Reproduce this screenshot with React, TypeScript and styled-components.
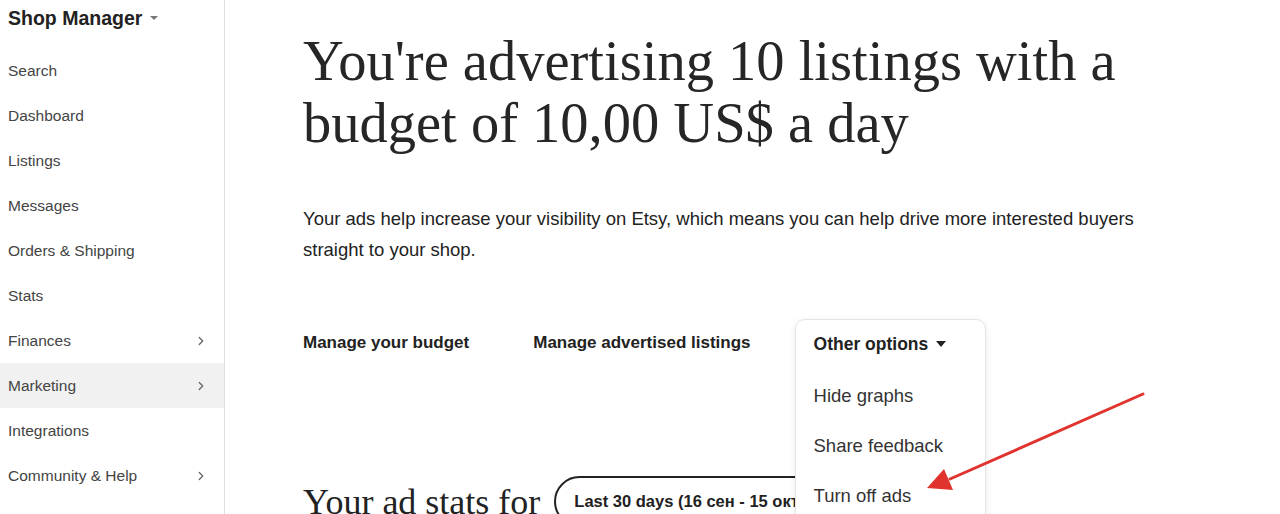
import React from 'react';
import styled, { createGlobalStyle } from 'styled-components';
import { ChevronRight } from 'lucide-react';

const GlobalStyles = createGlobalStyle`
  html, body {
    margin: 0;
    padding: 0;
    height: 100%;
    overflow: hidden;
    background: #fff;
  }
  body {
    font-family: "Liberation Sans", Arial, sans-serif;
    color: #222;
  }
  #root {
    height: 100%;
  }
`;

const Page = styled.div`
  display: flex;
  height: 100vh;
  overflow: hidden;
  position: relative;
`;

const Sidebar = styled.nav`
  width: 224px;
  flex-shrink: 0;
  border-right: 1px solid #e1e1e1;
  display: flex;
  flex-direction: column;
`;

const ShopTitle = styled.div`
  display: flex;
  align-items: center;
  gap: 8px;
  padding: 3px 8px 0;
  height: 30px;
  font-size: 19.5px;
  font-weight: 700;
  color: #222;
  margin-bottom: 15px;
`;

const Caret = styled.span`
  width: 0;
  height: 0;
  border-left: 4px solid transparent;
  border-right: 4px solid transparent;
  border-top: 4px solid #777;
`;

const NavItem = styled.div<{ $active?: boolean }>`
  display: flex;
  align-items: center;
  justify-content: space-between;
  height: 45px;
  padding: 0 16px 0 8px;
  font-size: 15.5px;
  color: #444;
  background: ${(p) => (p.$active ? '#f1f1f1' : 'transparent')};
`;

const Main = styled.main`
  flex: 1;
  padding: 30px 0 0 78px;
`;

const Headline = styled.h1`
  margin: 0;
  font-family: "Liberation Serif", "Times New Roman", serif;
  font-weight: 400;
  font-size: 56.5px;
  line-height: 62px;
  color: #262626;
  max-width: 860px;
`;

const Intro = styled.p`
  margin: 49px 0 0;
  font-size: 18.5px;
  line-height: 31px;
  color: #222;
  max-width: 850px;
`;

const ActionRow = styled.div`
  display: flex;
  align-items: center;
  margin-top: 67px;
  height: 22px;
`;

const ActionLink = styled.div<{ $gap: number }>`
  font-size: 17px;
  font-weight: 700;
  color: #222;
  margin-right: ${(p) => p.$gap}px;
`;

const DropdownWrap = styled.div`
  position: relative;
  width: 152px;
  height: 22px;
`;

const DropdownPanel = styled.div`
  position: absolute;
  left: -19px;
  top: -13px;
  width: 191px;
  height: 240px;
  border: 1px solid #e4e4e4;
  border-radius: 10px;
  box-shadow: 0 2px 8px rgba(0, 0, 0, 0.08);
  background: #fff;
  padding: 13px 18px;
  box-sizing: border-box;
  z-index: 2;
`;

const DropdownToggle = styled.div`
  display: flex;
  align-items: center;
  gap: 8px;
  font-size: 17.5px;
  font-weight: 700;
  line-height: 22px;
  color: #222;
  margin-bottom: 30px;
`;

const DarkCaret = styled.span`
  width: 0;
  height: 0;
  border-left: 5px solid transparent;
  border-right: 5px solid transparent;
  border-top: 6px solid #222;
`;

const MenuItem = styled.div`
  font-size: 18.5px;
  color: #333;
  line-height: 22px;
  margin-bottom: 28px;
`;

const StatsRow = styled.div`
  display: flex;
  align-items: center;
  gap: 14px;
  margin-top: 122px;
`;

const StatsTitle = styled.h2`
  margin: 0;
  font-family: "Liberation Serif", "Times New Roman", serif;
  font-weight: 400;
  font-size: 36px;
  color: #222;
  white-space: nowrap;
`;

const RangeButton = styled.div`
  border: 2px solid #222;
  border-radius: 26px;
  padding: 14px 18px;
  font-size: 16.5px;
  font-weight: 700;
  color: #222;
  white-space: nowrap;
  width: 290px;
`;

const Annotation = styled.svg`
  position: absolute;
  left: 0;
  top: 0;
  width: 100%;
  height: 100%;
  pointer-events: none;
  z-index: 3;
`;

const navItems = [
  { label: 'Search' },
  { label: 'Dashboard' },
  { label: 'Listings' },
  { label: 'Messages' },
  { label: 'Orders & Shipping' },
  { label: 'Stats' },
  { label: 'Finances', arrow: true },
  { label: 'Marketing', arrow: true, active: true },
  { label: 'Integrations' },
  { label: 'Community & Help', arrow: true },
];

const App: React.FC = () => {
  return (
    <>
      <GlobalStyles />
      <Page>
        <Sidebar>
          <ShopTitle>
            Shop Manager <Caret />
          </ShopTitle>
          {navItems.map((item) => (
            <NavItem key={item.label} $active={item.active}>
              {item.label}
              {item.arrow && <ChevronRight size={14} color="#666" strokeWidth={2.2} />}
            </NavItem>
          ))}
        </Sidebar>
        <Main>
          <Headline>You're advertising 10 listings with a budget of 10,00 US$ a day</Headline>
          <Intro>
            Your ads help increase your visibility on Etsy, which means you can help drive more
            interested buyers straight to your shop.
          </Intro>
          <ActionRow>
            <ActionLink $gap={64}>Manage your budget</ActionLink>
            <ActionLink $gap={63}>Manage advertised listings</ActionLink>
            <DropdownWrap>
              <DropdownPanel>
                <DropdownToggle>
                  Other options <DarkCaret />
                </DropdownToggle>
                <MenuItem>Hide graphs</MenuItem>
                <MenuItem>Share feedback</MenuItem>
                <MenuItem>Turn off ads</MenuItem>
              </DropdownPanel>
            </DropdownWrap>
          </ActionRow>
          <StatsRow>
            <StatsTitle>Your ad stats for</StatsTitle>
            <RangeButton>Last 30 days (16 сен - 15 окт)</RangeButton>
          </StatsRow>
        </Main>
        <Annotation viewBox="0 0 1280 514">
          <line x1="1143" y1="394" x2="950" y2="479" stroke="#e0332e" strokeWidth="3" strokeLinecap="round" />
          <polygon points="927,488 944,469 953,490" fill="#e0332e" />
        </Annotation>
      </Page>
    </>
  );
};

export default App;
